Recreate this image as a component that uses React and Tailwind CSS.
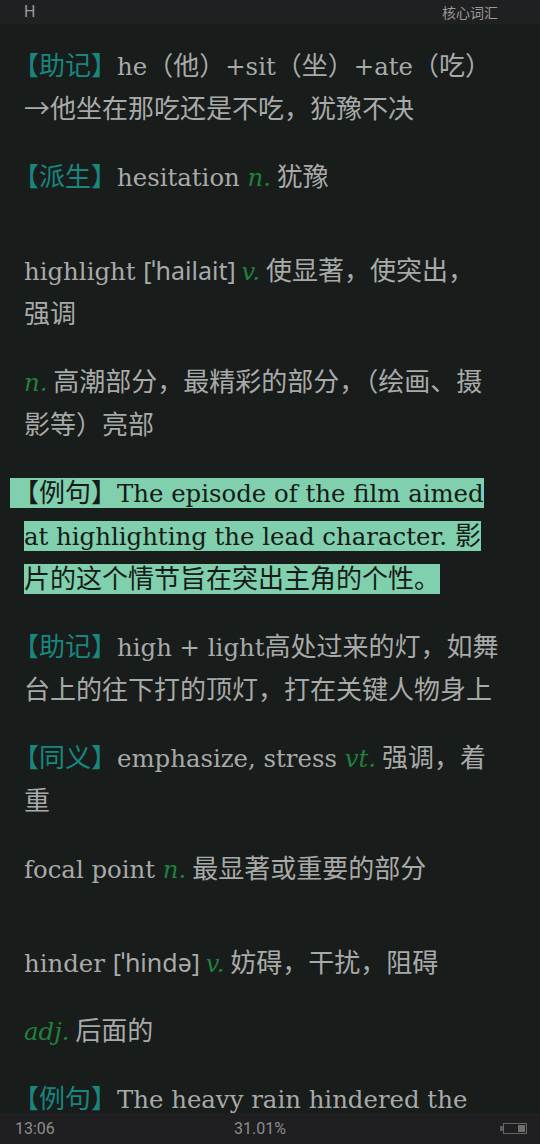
import React from "react";

const E = ({ children }) => (
  <span className="font-['DejaVu_Serif','Noto_Sans_CJK_SC',serif] text-[24.4px]">{children}</span>
);
const Ph = ({ children }) => (
  <span className="font-['Noto_Sans','Noto_Sans_CJK_SC',sans-serif] text-[25px]">{children}</span>
);
const Pos = ({ children }) => (
  <span className="font-['DejaVu_Serif',serif] text-[24.4px] italic text-[#22803f]">{children}</span>
);
const Lb = ({ children }) => <span className="text-[#17877f]">{children}</span>;

const Line = ({ children, first }) => (
  <div className={`h-[43px] leading-[43px] whitespace-nowrap ${first ? "-ml-[11px]" : ""}`}>{children}</div>
);

const Para = ({ children, mt }) => <div className={mt}>{children}</div>;

const HL = ({ children, first }) => (
  <div className={`h-[43px] flex items-center whitespace-nowrap ${first ? "-ml-[14px]" : ""}`}>
    <span className={`inline-block h-[30px] leading-[26px] bg-[#80cfad] text-[#161a18] ${first ? "pl-[3px]" : ""}`}>
      {children}
    </span>
  </div>
);

export default function App() {
  return (
    <div className="w-[540px] h-[1144px] flex flex-col bg-[#181c1a] overflow-hidden font-['Noto_Sans_CJK_SC',sans-serif]">
      {/* top bar */}
      <div className="h-[24px] shrink-0 bg-[#1f2021] flex items-center justify-between pl-[24px] pr-[42px]">
        <span className="font-['Roboto',sans-serif] text-[16px] text-[#9a9a9a]">H</span>
        <span className="text-[14px] text-[#9a9a9a]">核心词汇</span>
      </div>

      {/* content */}
      <div className="flex-1 overflow-hidden pt-[18px] pl-[24px] text-[26px] text-[#a8aaa9]">
        <Para>
          <Line first>
            <Lb>【助记】</Lb>
            <E>he</E>（他）<E>+sit</E>（坐）<E>+ate</E>（吃）
          </Line>
          <Line>→他坐在那吃还是不吃，犹豫不决</Line>
        </Para>

        <Para mt="mt-[25px]">
          <Line first>
            <Lb>【派生】</Lb>
            <E>hesitation </E>
            <Pos>n.</Pos> 犹豫
          </Line>
        </Para>

        <Para mt="mt-[51px]">
          <Line>
            <E>highlight </E>
            <Ph>[ˈhailait]</Ph> <Pos>v.</Pos> 使显著，使突出，
          </Line>
          <Line>强调</Line>
        </Para>

        <Para mt="mt-[25px]">
          <Line>
            <Pos>n.</Pos> 高潮部分，最精彩的部分，（绘画、摄
          </Line>
          <Line>影等）亮部</Line>
        </Para>

        <Para mt="mt-[27px]">
          <HL first>
            【例句】<E>The episode of the film aimed</E>
          </HL>
          <HL>
            <E>at highlighting the lead character. </E>影
          </HL>
          <HL>片的这个情节旨在突出主角的个性。</HL>
        </Para>

        <Para mt="mt-[23px]">
          <Line first>
            <Lb>【助记】</Lb>
            <E>high + light</E>高处过来的灯，如舞
          </Line>
          <Line>台上的往下打的顶灯，打在关键人物身上</Line>
        </Para>

        <Para mt="mt-[25px]">
          <Line first>
            <Lb>【同义】</Lb>
            <E>emphasize, stress </E>
            <Pos>vt.</Pos> 强调，着
          </Line>
          <Line>重</Line>
        </Para>

        <Para mt="mt-[25px]">
          <Line>
            <E>focal point </E>
            <Pos>n.</Pos> 最显著或重要的部分
          </Line>
        </Para>

        <Para mt="mt-[51px]">
          <Line>
            <E>hinder </E>
            <Ph>[ˈhində]</Ph> <Pos>v.</Pos> 妨碍，干扰，阻碍
          </Line>
        </Para>

        <Para mt="mt-[25px]">
          <Line>
            <Pos>adj.</Pos> 后面的
          </Line>
        </Para>

        <Para mt="mt-[25px]">
          <Line first>
            <Lb>【例句】</Lb>
            <E>The heavy rain hindered the</E>
          </Line>
        </Para>
      </div>

      {/* bottom bar */}
      <div className="h-[31px] shrink-0 bg-[#1f1f21] flex items-center pl-[15px] pr-[13px] font-['Roboto',sans-serif] text-[16px] text-[#8c8c8c]">
        <span className="w-[219px]">13:06</span>
        <span>31.01%</span>
        <div className="ml-auto flex items-center">
          <div className="w-[3px] h-[5px] bg-[#5a5a5a]" />
          <div className="w-[24px] h-[11px] border border-[#666] flex justify-end p-[1px]">
            <div className="w-[7px] h-full bg-[#6e6e6e]" />
          </div>
        </div>
      </div>
    </div>
  );
}
